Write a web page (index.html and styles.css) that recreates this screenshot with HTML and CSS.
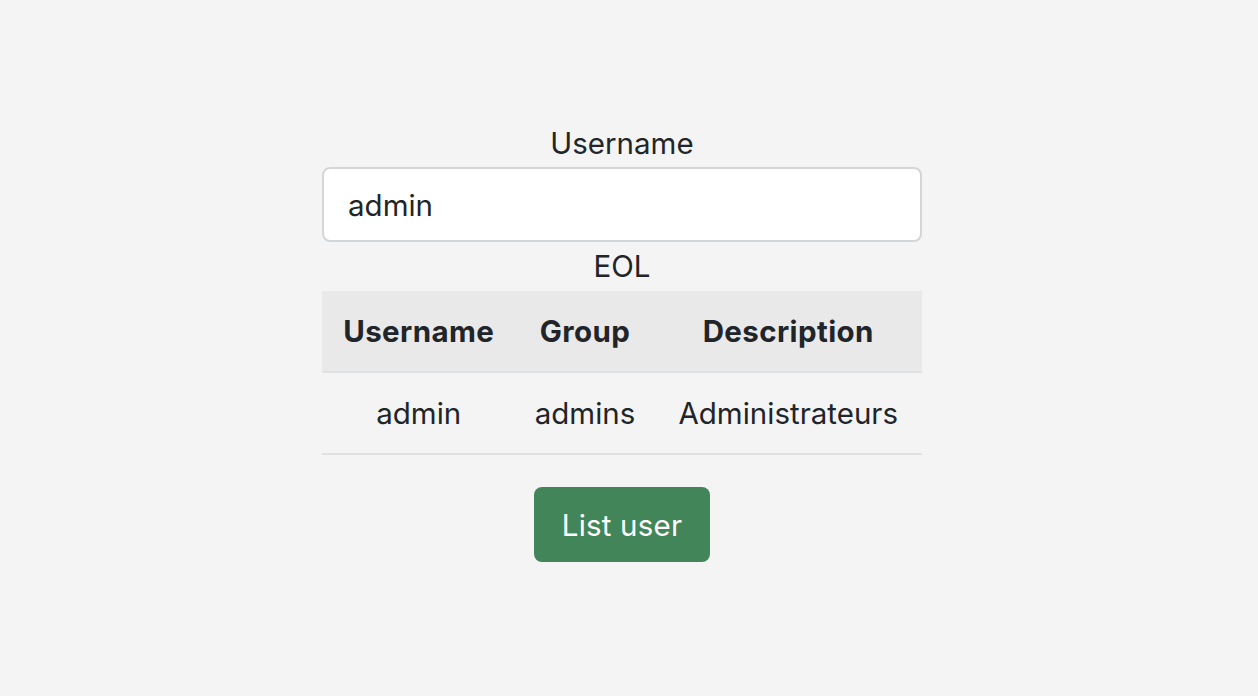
FILE: index.html
```html
<!DOCTYPE html>
<html>
<head>
<meta charset="utf-8">
<link rel="stylesheet" href="styles.css">
</head>
<body>
<main class="page">
  <form class="panel">
    <label class="label" for="username">Username</label>
    <input class="input" id="username" type="text" value="admin">
    <div class="eol">EOL</div>
    <table class="users">
      <thead>
        <tr><th>Username</th><th>Group</th><th>Description</th></tr>
      </thead>
      <tbody>
        <tr><td>admin</td><td>admins</td><td>Administrateurs</td></tr>
      </tbody>
    </table>
    <button class="btn" type="button">List user</button>
  </form>
</main>
</body>
</html>
```

FILE: styles.css
```css
* { box-sizing: border-box; }
html, body { margin: 0; padding: 0; }
body {
  background: #f4f4f4;
  color: #212529;
  font-family: Inter, "Noto Sans", "Liberation Sans", sans-serif;
  font-size: 29.5px;
  line-height: 42px;
  width: 1258px;
  height: 696px;
}
.page {
  display: flex;
  justify-content: center;
  padding-top: 122px;
  padding-right: 14px;
}
.panel {
  width: 600px;
  display: flex;
  flex-direction: column;
  align-items: center;
}
.label {
  display: block;
  text-align: center;
  line-height: 42px;
  margin-bottom: 3px;
}
.input {
  width: 600px;
  height: 75px;
  border: 2px solid #d3d6d9;
  border-radius: 8px;
  background: #fff;
  padding: 0 24px;
  font: inherit;
  color: #212529;
  outline: none;
}
.eol {
  height: 49px;
  line-height: 48px;
  text-align: center;
}
.users {
  width: 600px;
  border-collapse: collapse;
  text-align: center;
}
.users th, .users td {
  padding: 19px 14px 19px;
  line-height: 42px;
}
.users thead tr { background: #e9e9e9; }
.users th {
  font-weight: 700;
  letter-spacing: 0.4px;
  border-bottom: 2px solid #dfe2e5;
}
.users td {
  border-bottom: 2px solid #dfe2e5;
}
.btn {
  margin-top: 32px;
  height: 75px;
  padding: 0 28px;
  letter-spacing: 0.2px;
  background: #428558;
  color: #fff;
  border: none;
  border-radius: 8px;
  font: inherit;
  cursor: pointer;
}
```
